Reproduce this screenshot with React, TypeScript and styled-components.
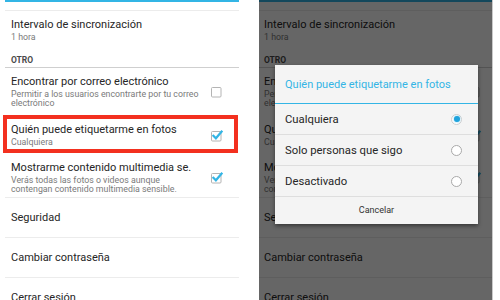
import styled, { createGlobalStyle } from "styled-components";

const GlobalStyle = createGlobalStyle`
  html, body {
    margin: 0;
    padding: 0;
    background: #fff;
  }
  body {
    font-family: Roboto, "Noto Sans", "Liberation Sans", sans-serif;
    overflow: hidden;
  }
`;

type Row = {
  title: string;
  sub?: string[];
  check?: "on" | "off";
  pt?: number;
  pb?: number;
  single?: boolean;
  mark?: boolean;
};

const rows: Row[] = [
  { title: "Intervalo de sincronización", sub: ["1 hora"], pt: 7, pb: 7 },
];

const otherRows: Row[] = [
  {
    title: "Encontrar por correo electrónico",
    sub: ["Permitir a los usuarios encontrarte por tu correo", "electrónico"],
    check: "off",
    pt: 7,
    pb: 7,
  },
  {
    title: "Quién puede etiquetarme en fotos",
    sub: ["Cualquiera"],
    check: "on",
    pt: 8,
    pb: 6,
    mark: true,
  },
  {
    title: "Mostrarme contenido multimedia se.",
    sub: ["Verás todas las fotos o videos aunque", "contengan contenido multimedia sensible."],
    check: "on",
    pt: 8,
    pb: 3,
  },
  { title: "Seguridad", single: true },
  { title: "Cambiar contraseña", single: true },
  { title: "Cerrar sesión", single: true },
];

const options = [
  { label: "Cualquiera", selected: true },
  { label: "Solo personas que sigo", selected: false },
  { label: "Desactivado", selected: false },
];

const CheckBox = ({ on }: { on: boolean }) => (
  <Box width="14" height="13" viewBox="0 0 14 13">
    <rect x="1.5" y="2.5" width="9.5" height="9.5" rx="1" fill="none" stroke="#b4b4b4" strokeWidth="1" />
    {on && (
      <path d="M3.4 6.8 L5.9 9.3 L11.6 2.6" fill="none" stroke="#33b5e5" strokeWidth="2.2" strokeLinecap="square" />
    )}
  </Box>
);

const SettingsList = ({
  lineLeft,
  lineRight,
  textLeft,
  boxRight,
  highlight,
}: {
  lineLeft: number;
  lineRight: number;
  textLeft: number;
  boxRight: number;
  highlight: boolean;
}) => (
  <List $l={lineLeft} $r={lineRight}>
    <TopStrip />
    {rows.map((r) => (
      <Item key={r.title} $pt={r.pt ?? 0} $pb={r.pb ?? 0} $left={textLeft} $right={boxRight}>
        <Texts>
          <Title>{r.title}</Title>
          {r.sub && <Sub>{r.sub.map((s) => <div key={s}>{s}</div>)}</Sub>}
        </Texts>
      </Item>
    ))}
    <Section $left={textLeft}>OTRO</Section>
    {otherRows.map((r) =>
      r.single ? (
        <SingleItem key={r.title} $left={textLeft}>
          <Title>{r.title}</Title>
        </SingleItem>
      ) : (
        <Item
          key={r.title}
          $pt={r.pt ?? 0}
          $pb={r.pb ?? 0}
          $left={textLeft}
          $right={boxRight}
          $mark={highlight && !!r.mark}
          $divider={r.title.startsWith("Mostrarme")}
        >
          <Texts>
            <Title>{r.title}</Title>
            {r.sub && <Sub>{r.sub.map((s) => <div key={s}>{s}</div>)}</Sub>}
          </Texts>
          {r.check && <CheckBox on={r.check === "on"} />}
        </Item>
      )
    )}
  </List>
);

export default function App() {
  return (
    <>
      <GlobalStyle />
      <Screen>
        <Panel $width={240}>
          <SettingsList lineLeft={5} lineRight={1} textLeft={6} boxRight={15} highlight />
        </Panel>
        <Panel $width={233} $edge>
          <SettingsList lineLeft={0} lineRight={0} textLeft={5} boxRight={10} highlight={false} />
          <Dim />
          <Dialog>
            <DialogTitle>Quién puede etiquetarme en fotos</DialogTitle>
            {options.map((o) => (
              <Option key={o.label}>
                <span>{o.label}</span>
                <Radio $on={o.selected} />
              </Option>
            ))}
            <Cancel>Cancelar</Cancel>
          </Dialog>
        </Panel>
      </Screen>
    </>
  );
}

const Screen = styled.div`
  display: flex;
  gap: 19px;
  width: 500px;
  height: 300px;
  background: #fff;
`;

const Panel = styled.div<{ $width: number; $edge?: boolean }>`
  position: relative;
  flex: 0 0 ${(p) => p.$width}px;
  height: 300px;
  overflow: hidden;
  background: #fff;
  border-right: ${(p) => (p.$edge ? "1px solid #c9c9c9" : "none")};
`;

const List = styled.div<{ $l: number; $r: number }>`
  display: flex;
  flex-direction: column;
  padding: 0 ${(p) => p.$r}px 0 ${(p) => p.$l}px;
  color: #2e2e2e;
`;

const TopStrip = styled.div`
  height: 8px;
  border-top: 2px solid #33b5e5;
  border-bottom: 1px solid #ececec;
`;

const Item = styled.div<{
  $pt: number;
  $pb: number;
  $left: number;
  $right: number;
  $mark?: boolean;
  $divider?: boolean;
}>`
  position: relative;
  display: flex;
  align-items: center;
  justify-content: space-between;
  padding: ${(p) => p.$pt}px ${(p) => p.$right}px ${(p) => p.$pb}px ${(p) => p.$left}px;
  border-bottom: ${(p) => (p.$divider ? "1px solid #ececec" : "none")};

  &::after {
    content: "";
    display: ${(p) => (p.$mark ? "block" : "none")};
    position: absolute;
    top: 0;
    bottom: 0;
    left: -2px;
    right: 1px;
    border: 4px solid #f3301f;
  }
`;

const Box = styled.svg`
  flex-shrink: 0;
`;

const SingleItem = styled.div<{ $left: number }>`
  display: flex;
  align-items: center;
  min-height: 39px;
  padding-left: ${(p) => p.$left}px;
  border-bottom: 1px solid #ececec;
`;

const Texts = styled.div`
  display: flex;
  flex-direction: column;
`;

const Title = styled.div`
  font-size: 11px;
  line-height: 14px;
  color: #262626;
  white-space: nowrap;
`;

const Sub = styled.div`
  margin-top: 1px;
  font-size: 8.8px;
  line-height: 9px;
  color: #7a7a7a;
  white-space: nowrap;
`;

const Section = styled.div<{ $left: number }>`
  padding: 6px 0 2px ${(p) => p.$left}px;
  font-size: 8.5px;
  line-height: 10px;
  font-weight: 700;
  color: #4a4a4a;
  border-bottom: 1px solid #cfcfcf;
`;

const Dim = styled.div`
  position: absolute;
  inset: 0;
  background: rgba(0, 0, 0, 0.6);
`;

const Dialog = styled.div`
  position: absolute;
  left: 16px;
  top: 65px;
  width: 203px;
  display: flex;
  flex-direction: column;
  background: #f4f4f4;
  box-shadow: 0 2px 4px rgba(0, 0, 0, 0.45);
`;

const DialogTitle = styled.div`
  display: flex;
  align-items: center;
  height: 38px;
  padding-left: 10px;
  font-size: 11px;
  color: #33b5e5;
  border-bottom: 1.5px solid #33b5e5;
  white-space: nowrap;
`;

const Option = styled.div`
  display: flex;
  align-items: center;
  justify-content: space-between;
  height: 30px;
  padding: 0 16px 0 10px;
  font-size: 11.3px;
  color: #262626;
  border-bottom: 1px solid #dedede;
`;

const Radio = styled.span<{ $on: boolean }>`
  display: flex;
  align-items: center;
  justify-content: center;
  box-sizing: border-box;
  width: 11px;
  height: 11px;
  border-radius: 50%;
  border: 1px solid ${(p) => (p.$on ? "#cfcfcf" : "#a9a9a9")};
  background: #fff;

  &::after {
    content: "";
    display: ${(p) => (p.$on ? "block" : "none")};
    width: 6px;
    height: 6px;
    border-radius: 50%;
    background: #1fa3dc;
    box-shadow: 0 0 2px rgba(51, 181, 229, 0.7);
  }
`;

const Cancel = styled.div`
  display: flex;
  align-items: center;
  justify-content: center;
  height: 26.5px;
  font-size: 9px;
  color: #333;
`;
